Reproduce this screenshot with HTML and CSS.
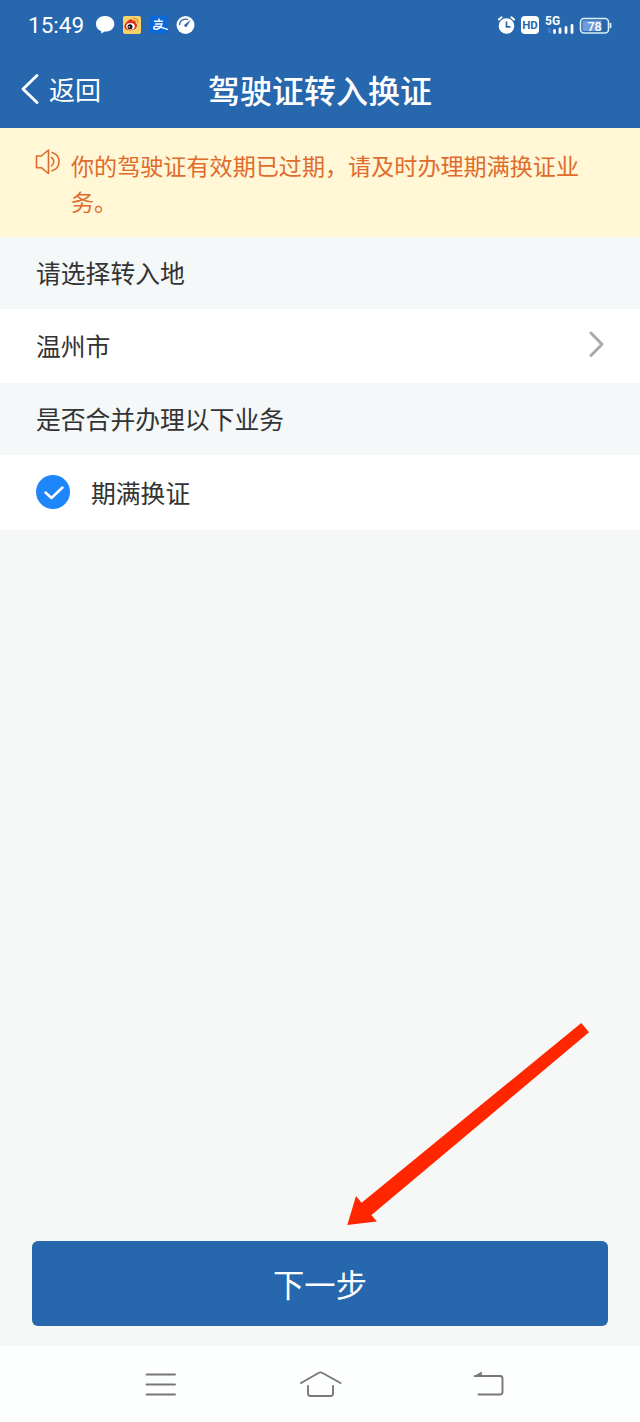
FILE: index.html
```html
<!DOCTYPE html>
<html lang="zh-CN">
<head>
  <meta charset="UTF-8" />
  <meta name="viewport" content="width=device-width, initial-scale=1.0" />
  <title>驾驶证转入换证</title>
  <link rel="stylesheet" href="styles.css">
</head>
<body>

  <header>
    <div class="status">
      <span class="hora">15:49</span>
      <svg class="apps" width="102" height="24" viewBox="94 13 102 24">
        <!-- mensaje -->
        <path fill="#fff" d="M105 16c-5.300 0-9 3.500-9 8 0 3.500 1.900 6 5 7.100l.4 2.400 3.300-1.900c5.700.2 9.600-3 9.600-7.600 0-4.500-4-8-9.300-8z"/>
        <!-- weibo -->
        <rect x="123" y="16" width="18" height="18" rx="2" fill="#f5d36b"/>
        <path fill="#e5281c" d="M129 20c2-1.500 3.500-.8 3.400.8 2.500-.8 3.800.3 3.100 2.200 2 .8 2.100 3.500.2 5.400-3 2.900-11 2.300-11.300-1.700-.1-2.200 2.100-5 4.600-6.700z"/>
        <ellipse cx="130.500" cy="26.300" rx="4.300" ry="3.400" fill="#fff"/>
        <circle cx="130" cy="26.700" r="2.500" fill="#151515"/>
        <circle cx="129.300" cy="27" r=".8" fill="#fff"/>
        <path fill="none" stroke="#ef8a22" stroke-width="1.300" d="M133.500 18.500c3.300-.3 4.900 2 4 4.800"/>
        <!-- alipay -->
        <rect x="150" y="15.500" width="18" height="18" rx="3" fill="#0868dc"/>
        <path fill="none" stroke="#fff" stroke-width="1.400" stroke-linecap="round" d="M154.500 21.300h8M159 19v2.300M155.500 24h6.500c-1 2.700-3.500 5.300-6 5.300-3 0-3-3 0-3 3.500 0 7 1.700 11.500 3"/>
        <!-- velocidad -->
        <circle cx="185.500" cy="25" r="9" fill="#fff"/>
        <path fill="none" stroke="#2767ae" stroke-width="1.300" d="M179.500 25a6 6 0 0 1 8.500-5.300"/>
        <path fill="#2767ae" d="M190.800 19.800l-3.700 6.300c-1 1.700-3.500.5-2.700-1.300z"/>
      </svg>
      <svg class="sistema" width="116" height="26" viewBox="496 12 116 26">
        <!-- alarma -->
        <circle cx="506.500" cy="26" r="7.800" fill="#fff"/>
        <path fill="none" stroke="#fff" stroke-width="2" stroke-linecap="round" d="M499 19.500l2.600-2.200M514 19.500l-2.600-2.200"/>
        <path fill="none" stroke="#2767ae" stroke-width="1.700" d="M506.500 21.500v5.300h4"/>
        <rect x="521" y="16" width="18" height="18" rx="4" fill="#fff"/>
        <text class="hd" x="530" y="29.300">HD</text>
        <text class="red" x="545" y="25">5G</text>
        <path stroke="#fff" stroke-width="2.800" stroke-linecap="round" d="M554.500 30.500v2M560 29v3.500M566 27.500v5M572 25.500v7"/>
        <rect x="548" y="28" width="3" height="5" fill="#3c7ac9"/>
        <!-- bateria -->
        <rect x="580.500" y="18.500" width="28" height="14.500" rx="3.500" fill="none" stroke="#d9eef2" stroke-width="1.600"/>
        <rect x="582.500" y="20.500" width="19" height="10.500" rx="1" fill="#6f9bd6"/>
        <path stroke="#d9eef2" stroke-width="1.800" d="M610.500 23v5"/>
        <text class="carga" x="594.500" y="30.500">78</text>
      </svg>
    </div>
    <div class="barra">
      <a class="volver">
        <svg width="20" height="32" viewBox="20 73 20 32">
          <path fill="none" stroke="#fff" stroke-width="2.900" stroke-linecap="round" stroke-linejoin="round" d="M37 75.500L23 89l14 13.500"/>
        </svg>
        <span>返回</span>
      </a>
      <h1>驾驶证转入换证</h1>
    </div>
  </header>

  <div class="aviso">
    <svg width="26" height="28" viewBox="35 148 26 28">
      <g fill="none" stroke="#df6c2d" stroke-width="1.600" stroke-linejoin="round" stroke-linecap="round">
        <path d="M36.500 156h4.800l7.200-6v23.500l-7.200-5.800h-4.800z"/>
        <path d="M51.500 157.500c3 1.800 3 6.300 0 8.200M52 152.500c9.300 2.500 9.300 15.700 0 18.200"/>
      </g>
    </svg>
    <p>你的驾驶证有效期已过期，请及时办理期满换证业务。</p>
  </div>

  <main>
    <h2>请选择转入地</h2>
    <div class="fila">
      <span>温州市</span>
      <svg class="flecha-fila" width="18" height="28" viewBox="588 332 18 28">
        <path fill="none" stroke="#aaa" stroke-width="3" stroke-linecap="round" stroke-linejoin="round" d="M591 334l11 11.200L591 356.500"/>
      </svg>
    </div>
    <h2>是否合并办理以下业务</h2>
    <div class="fila opcion">
      <svg width="34" height="34" viewBox="0 0 34 34">
        <circle cx="17" cy="17" r="17" fill="#1e86f8"/>
        <path fill="none" stroke="#fff" stroke-width="2.500" stroke-linecap="round" stroke-linejoin="round" d="M9.500 17.500l6 5.500L26.500 12.500"/>
      </svg>
      <span>期满换证</span>
    </div>
  </main>

  <button type="button" class="siguiente">下一步</button>

  <nav>
    <svg width="34" height="32" viewBox="144 1369 34 32">
      <path fill="none" stroke="#777" stroke-width="1.900" stroke-linecap="round" d="M146.500 1374.500h28.500M146.500 1384.500h28.500M146.500 1394.500h28.500"/>
    </svg>
    <svg width="44" height="32" viewBox="299 1369 44 32">
      <path fill="none" stroke="#777" stroke-width="1.900" stroke-linecap="round" stroke-linejoin="round" d="M301 1383l17.500-10q2-1.200 4 0L340.500 1383M308 1386v7.500q0 2.500 2.500 2.500h20q2.500 0 2.500-2.500v-7.500"/>
    </svg>
    <svg width="34" height="32" viewBox="471 1369 34 32">
      <path fill="none" stroke="#777" stroke-width="1.900" stroke-linecap="round" d="M475 1376h25q2.500 0 2.500 2.500v13.500q0 2.500-2.500 2.500h-21.500"/>
      <path fill="#777" d="M473 1376.800l8.800-5.300v5.300z"/>
    </svg>
  </nav>

  <!-- flecha roja hacia el botón -->
  <svg class="indicador" width="244" height="204" viewBox="346 1022 244 204">
    <path fill="#ff2600" d="M581.300 1023l7.700 9.300L371.500 1215l5.300 6.500-29.500 3.500 8.700-29 5.600 6.700z"/>
  </svg>

</body>
</html>
```
FILE: styles.css
```css
body {
  font-family: "Noto Sans CJK SC", sans-serif;
  background-color: #f6f8f8;
  color: #333;
  margin: 0;
  min-height: 1422px;
  display: flex;
  flex-direction: column;
  position: relative;
}

svg {
  display: block;
  flex: none;
}

header {
  background-color: #2767ae;
  color: white;
  height: 128px;
}

.status {
  display: flex;
  align-items: center;
  height: 50px;
  padding: 0 28px;
}

.hora {
  font-family: Roboto, sans-serif;
  font-size: 22.5px;
  width: 66px;
}

.sistema {
  margin-left: auto;
}

.hd,
.red,
.carga {
  font-family: Roboto, sans-serif;
  font-weight: bold;
}

.hd {
  font-size: 11.5px;
  fill: #2767ae;
  text-anchor: middle;
}

.red {
  font-size: 12px;
  fill: white;
}

.carga {
  font-size: 12.5px;
  font-weight: 500;
  fill: white;
  text-anchor: middle;
}

.barra {
  display: grid;
  grid-template-columns: 1fr auto 1fr;
  align-items: center;
  height: 78px;
  padding: 0 20px;
}

.volver {
  display: flex;
  align-items: center;
  gap: 9px;
  font-size: 26px;
}

.volver span {
  padding-bottom: 2px;
}

h1 {
  font-size: 32px;
  font-weight: 500;
  margin: 0;
}

.aviso {
  display: flex;
  gap: 10px;
  box-sizing: border-box;
  height: 109px;
  padding: 20px 40px 0 35px;
  background-color: #fff7d6;
  color: #df6c2d;
}

.aviso p {
  margin: -1px 0 0;
  font-size: 23.1px;
  line-height: 36px;
}

h2 {
  display: flex;
  align-items: center;
  box-sizing: border-box;
  height: 72px;
  margin: 0;
  padding: 0 36px 2px;
  font-size: 24.8px;
  font-weight: normal;
  background-color: #f4f8f9;
}

.fila {
  display: flex;
  align-items: center;
  justify-content: space-between;
  box-sizing: border-box;
  height: 74px;
  padding: 0 34px 2px 36px;
  font-size: 24.8px;
  background-color: white;
}

.opcion {
  justify-content: flex-start;
  gap: 21px;
  height: 75px;
}

.siguiente {
  height: 85px;
  margin: auto 32px 20px;
  border: none;
  border-radius: 6px;
  background-color: #2767ae;
  color: white;
  font-family: inherit;
  font-size: 31.3px;
}

nav {
  display: grid;
  grid-template-columns: 34px 44px 34px;
  column-gap: 121px 128px;
  column-gap: 0;
  justify-content: start;
  box-sizing: border-box;
  height: 76px;
  padding: 23px 0 0 144px;
  background-color: #fcfffe;
  grid-template-columns: 155px 172px 34px;
}

.indicador {
  position: absolute;
  left: 346px;
  top: 1022px;
}
```
